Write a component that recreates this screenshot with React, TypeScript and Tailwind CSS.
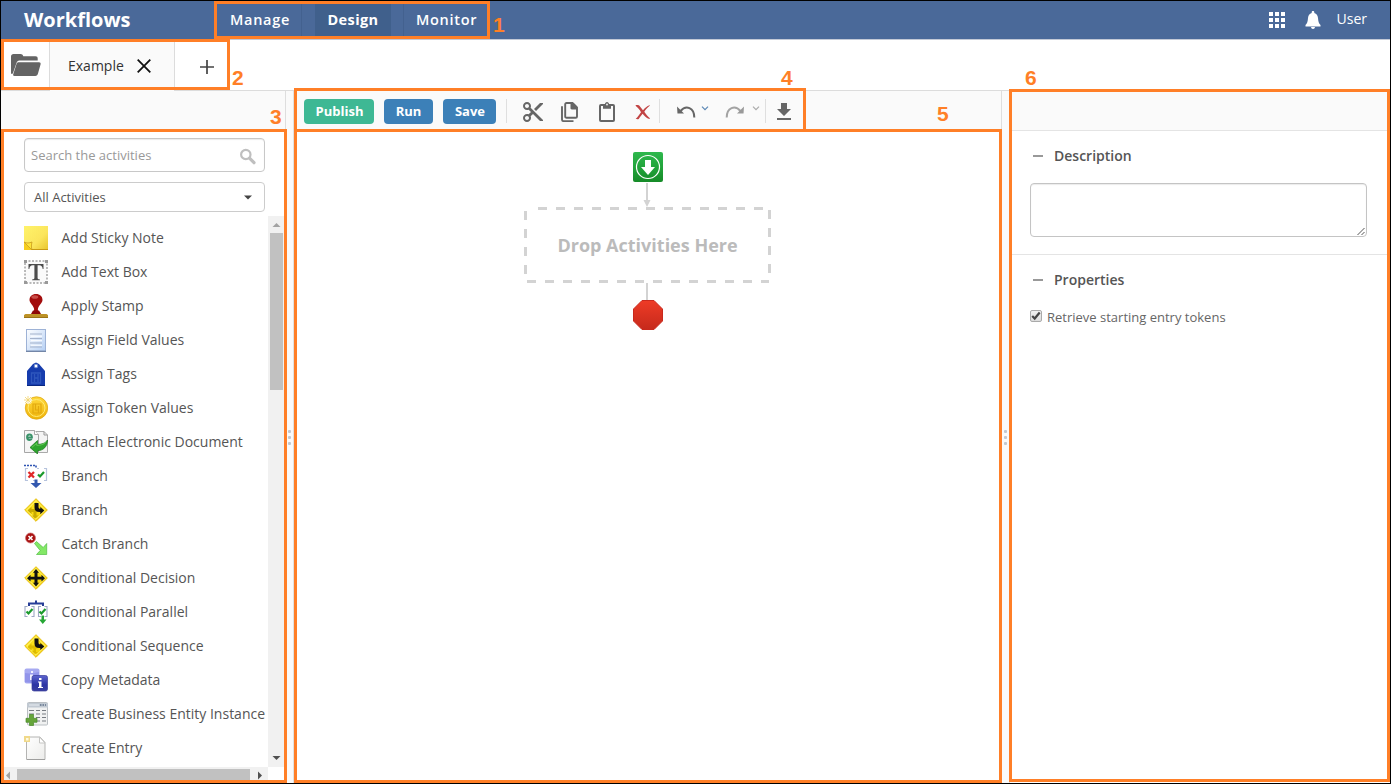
import type { ReactNode } from "react";

const BracketCheck = ({ x, y }: { x: number; y: number }) => (
  <path d={`M${x} ${y}l2 2 4-4.5`} fill="none" stroke="#1a9a2c" strokeWidth="2.200" />
);

const Svg24 = ({ children }: { children: ReactNode }) => (
  <svg width="24" height="24" viewBox="0 0 24 24" className="shrink-0">
    {children}
  </svg>
);

const StickyIcon = () => (
  <Svg24>
    <defs>
      <linearGradient id="sticky" x1="0" y1="0" x2="1" y2="1">
        <stop offset="0" stopColor="#fff36a" />
        <stop offset="0.6" stopColor="#fbe55c" />
        <stop offset="1" stopColor="#e8c42c" />
      </linearGradient>
    </defs>
    <path d="M0 0h24v24H8L0 16z" fill="url(#sticky)" />
    <path d="M8 23h16v1H8z" fill="#c99a14" />
    <path d="M0 16v8h8z" fill="#f6cd1c" />
    <path d="M0 16c3 1.500 5 1.200 8 0-.8 3-.8 5 0 8z" fill="#ffe53a" stroke="#c99a1c" strokeWidth=".8" />
  </Svg24>
);

const TextBoxIcon = () => (
  <Svg24>
    <rect x="1" y="1" width="22" height="22" fill="#fafafa" stroke="#777" strokeDasharray="2 1.5" />
    <path d="M0 0h3v3H0zM21 0h3v3h-3zM0 21h3v3H0zM21 21h3v3h-3z" fill="#999" />
    <path d="M4.500 4h15v5h-.8c-.4-2.600-1.300-3.700-3.400-3.700H13.600v12.500c0 1.100.5 1.600 2.300 1.700v.8H8.100v-.8c1.800-.1 2.300-.6 2.300-1.700V5.300H8.700C6.600 5.300 5.700 6.400 5.300 9h-.8z" fill="#4c4c4c" />
  </Svg24>
);

const StampIcon = () => (
  <Svg24>
    <path d="M12 0c4 0 6.500 2.500 6.500 6 0 3-3.500 5-4.500 8.500-.3 1.500 0 2.800.5 4h-5c.5-1.200.8-2.500.5-4C9 11 5.500 9 5.500 6 5.500 2.500 8 0 12 0z" fill="#a30d0d" />
    <ellipse cx="10.800" cy="3" rx="3.500" ry="1.800" fill="#d96a62" opacity=".7" />
    <path d="M9 16.500h6l2 3.500H7z" fill="#8c0707" />
    <path d="M1.500 20h21l1.500 1v3H0v-3z" fill="#bd9226" />
    <path d="M0 23h24v1H0z" fill="#9a7418" />
  </Svg24>
);

const FieldsIcon = () => (
  <Svg24>
    <defs>
      <linearGradient id="fields" x1="0" y1="0" x2="1" y2="1">
        <stop offset="0" stopColor="#fdfeff" />
        <stop offset="1" stopColor="#b6d0f4" />
      </linearGradient>
    </defs>
    <rect x="2.500" y="1.500" width="19" height="21.500" fill="url(#fields)" stroke="#9db2d6" />
    <path d="M2 23.300h20" stroke="#5d7296" strokeWidth="1" />
    <path d="M6 6h12M6 10.500h12M6 15h12M6 19h12" stroke="#a5b3cc" strokeWidth="1.200" />
    <path d="M7 8.200h11M7 12.700h11M7 17.200h11" stroke="#fff" strokeWidth="1" />
  </Svg24>
);

const TagIcon = () => (
  <Svg24>
    <path d="M12 .5L15 2l6 7v15H3V9l6-7z" fill="#163cad" />
    <circle cx="12" cy="4" r="1.900" fill="#fff" stroke="#5275ca" strokeWidth=".8" />
    <path d="M7.500 11h9v10h-9zM10.500 12v8M10.500 16h4M14 12v8" fill="none" stroke="#2f57bd" strokeWidth="1.300" />
    <path d="M3 23.500h18" stroke="#0a277f" />
  </Svg24>
);

const TokenIcon = () => (
  <Svg24>
    <defs>
      <linearGradient id="token" x1="0" y1="0" x2="0" y2="1">
        <stop offset="0" stopColor="#ffd83b" />
        <stop offset="1" stopColor="#f0b40a" />
      </linearGradient>
    </defs>
    <circle cx="12.500" cy="12" r="11.200" fill="url(#token)" stroke="#dfaa15" strokeWidth=".8" />
    <circle cx="12.500" cy="12" r="8.500" fill="none" stroke="#ffeb75" />
    <path d="M9 8h8v9H9zM11.500 8v6h3M14.500 10v7" fill="none" stroke="#e2a90e" strokeWidth="1.200" />
    <path d="M4 0v8M0 4h8M1 1l6 6M7 1L1 7" stroke="#fff" strokeWidth="2" />
    <path d="M4 0v8M0 4h8M1 1l6 6M7 1L1 7" stroke="#f1d36b" strokeWidth=".8" />
  </Svg24>
);

const AttachIcon = () => (
  <Svg24>
    <path d="M11.500 1.500H20l3.500 3.500v17.500h-12z" fill="#f4f4f4" stroke="#aaa" />
    <path d="M20 1.500V5h3.500" fill="none" stroke="#999" />
    <path d="M.5.5h10l4 4V22.500H.5z" fill="#f5f5f5" stroke="#a6a6a6" />
    <path d="M10.500.5v4h4" fill="#fff" stroke="#aaa" />
    <path d="M3 7.500h5C8 5.500 7 4.500 5.500 4.500S3 5.700 3 7.300C3 9 4 10 5.500 10c1 0 1.800-.4 2.300-1" fill="none" stroke="#3a936a" strokeWidth="1.800" />
    <path d="M6 17.500l7.500-7v3.800c4.500 0 7.500-.8 10-4.300 0 6.500-4 10.500-10 10.700V24z" fill="#2ea52d" stroke="#157518" strokeWidth=".7" />
    <path d="M8 17.300l4.700-4v2c4 0 7-.8 9-3" fill="none" stroke="#70d360" strokeWidth=".8" />
  </Svg24>
);

const BranchRouteIcon = () => (
  <Svg24>
    <path d="M0 1.500h12v3" fill="none" stroke="#2e54b3" strokeWidth="1.600" strokeDasharray="2 1" />
    <path d="M4 4.500H1.500v12H4M20 4.500h2.500v12H20M9 16.500h2M13 4.500h2" fill="none" stroke="#b6c3dd" strokeWidth="1.200" />
    <path d="M4.500 8l5.500 5.500M10 8l-5.500 5.500" stroke="#e02828" strokeWidth="2.300" />
    <BracketCheck x={14} y={10.500} />
    <path d="M10.500 15.500h3V19h4L12 24l-5.500-5h4z" fill="#3358af" />
  </Svg24>
);

const Diamond = ({ children }: { children: ReactNode }) => (
  <Svg24>
    <defs>
      <linearGradient id="road" x1="0" y1="0" x2="1" y2="1">
        <stop offset="0" stopColor="#ffed28" />
        <stop offset="1" stopColor="#f1c900" />
      </linearGradient>
    </defs>
    <path d="M12 .7L23.300 12 12 23.300.7 12z" fill="url(#road)" stroke="#e6bd12" />
    <path d="M12 2.700L21.300 12 12 21.300 2.700 12z" fill="none" stroke="#fff68c" strokeWidth=".8" />
    {children}
  </Svg24>
);

const BranchSignIcon = () => (
  <Diamond>
    <path d="M3.500 12.500l4-3.500v2h6v3h-1v3.500h2l-3.500 3-3-3h1.500V14h-2v2z" fill="#c9aa00" />
    <path d="M10.500 5h4v4c0 1.200.6 1.800 1.800 1.800V9l4 3.600-4 3.600V14h-1c-3 0-4.800-1.500-4.800-4.500z" fill="#111" />
  </Diamond>
);

const DecisionIcon = () => (
  <Diamond>
    <path d="M12 3l3 3.800h-1.500v4h4V8.800L21 12.200l-3.500 3.300v-2h-4v3.300H15L12 20.500l-3-3.700h1.500v-3.300h-4v2L3 12.200l3.500-3.400v2h4v-4H9z" fill="#111" />
  </Diamond>
);

const SequenceIcon = () => (
  <Diamond>
    <path d="M3.500 13l4-3.500v2h6v3H12v3.500h2l-3 2-3-3h1.500v-2.500h-2v2z" fill="#dcbb00" />
    <path d="M10.500 4.500h4v4c0 1.300.6 2 1.800 2V9l4 3.600-4 3.400v-2h-1c-3 0-4.800-1.500-4.800-4.500z" fill="#111" />
  </Diamond>
);

const CatchIcon = () => (
  <Svg24>
    <circle cx="6.500" cy="6" r="5" fill="#a81111" stroke="#ce6b6b" strokeWidth=".7" />
    <path d="M4.500 4l4 4M8.500 4l-4 4" stroke="#fff" strokeWidth="1.600" />
    <path d="M10.500 11.500l2-2 6.700 6 3.500-4V22.500H12.500l3.700-4z" fill="#83e866" stroke="#51bd43" strokeWidth=".7" />
  </Svg24>
);

const ParallelIcon = () => (
  <Svg24>
    <path d="M5 6V3.500h14V6M12 3.500V.5" fill="none" stroke="#273e98" strokeWidth="2" />
    <path d="M3.500 6.500H1v10h2.500M7.500 6.500H10v10H7.500M17 6.500h-2.500v10H17M20.500 6.500H23v10h-2.500" fill="none" stroke="#9da8c4" strokeWidth="1.100" />
    <BracketCheck x={2.500} y={11.500} />
    <BracketCheck x={15.500} y={11.500} />
    <path d="M17.500 15.500h2.500v4h2.500L18.800 24 15 19.500h2.500z" fill="#26a735" />
  </Svg24>
);

const MetadataIcon = () => (
  <Svg24>
    <defs>
      <linearGradient id="meta" x1="0" y1="0" x2="0" y2="1">
        <stop offset="0" stopColor="#5c63ce" />
        <stop offset=".6" stopColor="#2c34a4" />
        <stop offset="1" stopColor="#3b40a0" />
      </linearGradient>
    </defs>
    <rect x=".5" y=".5" width="15" height="15" rx="2" fill="#a7aaf1" />
    <path d="M1 5C6 6 11 5 15 4v10c-5 1-9 1-14 0z" fill="#9194ea" />
    <path d="M7 3h2v2H7zM6 6.500h3V12H6z" fill="#f1f1ff" />
    <rect x="8" y="7.500" width="15.500" height="15.500" rx="2" fill="url(#meta)" stroke="#383c9b" strokeWidth=".7" />
    <path d="M15 10h2.500v2H15zM14 13.500h3.500V19H19v1h-5v-1h1v-4.500h-1z" fill="#fff" />
  </Svg24>
);

const EntityIcon = () => (
  <Svg24>
    <rect x="3.500" y=".5" width="20" height="22.500" rx="1" fill="#f0f1f1" stroke="#b9bec2" />
    <path d="M3 1h21v4.500H3z" fill="#c1c9d2" />
    <path d="M5 3h10" stroke="#e7ecf1" />
    <path d="M16 3h6" stroke="#60728b" strokeWidth="1.500" strokeDasharray="1.500 1" />
    <path d="M5 8.500h5M12 8.500h4M18 8.500h4M5 12h5M12 12h4M18 12h4M12 15.500h4M18 15.500h4M12 19h4M18 19h4" stroke="#777c82" strokeWidth="1.200" />
    <path d="M5.500 12.500h4v3.800h3.500v4H9.500V23.500h-4v-3.200H2v-4h3.500z" fill="#65a53a" stroke="#4b8a2b" strokeWidth=".7" />
  </Svg24>
);

const EntryIcon = () => (
  <Svg24>
    <defs>
      <linearGradient id="entry" x1="0" y1="0" x2="1" y2="1">
        <stop offset="0" stopColor="#fff" />
        <stop offset="1" stopColor="#ececea" />
      </linearGradient>
    </defs>
    <path d="M2.500 1h13.500l5 5.500v17H2.500z" fill="url(#entry)" stroke="#b4b4b2" />
    <path d="M15.500 1v6H21z" fill="#fff" stroke="#c5c5c3" />
    <path d="M0 0h6v6H0z" fill="#f0d98a" />
    <path d="M2 2h2.500v2.500H2z" fill="#fffbe0" />
    <path d="M3 23.500h18" stroke="#999" strokeWidth=".8" />
  </Svg24>
);

const activities: { label: string; icon: ReactNode }[] = [
  { label: "Add Sticky Note", icon: <StickyIcon /> },
  { label: "Add Text Box", icon: <TextBoxIcon /> },
  { label: "Apply Stamp", icon: <StampIcon /> },
  { label: "Assign Field Values", icon: <FieldsIcon /> },
  { label: "Assign Tags", icon: <TagIcon /> },
  { label: "Assign Token Values", icon: <TokenIcon /> },
  { label: "Attach Electronic Document", icon: <AttachIcon /> },
  { label: "Branch", icon: <BranchRouteIcon /> },
  { label: "Branch", icon: <BranchSignIcon /> },
  { label: "Catch Branch", icon: <CatchIcon /> },
  { label: "Conditional Decision", icon: <DecisionIcon /> },
  { label: "Conditional Parallel", icon: <ParallelIcon /> },
  { label: "Conditional Sequence", icon: <SequenceIcon /> },
  { label: "Copy Metadata", icon: <MetadataIcon /> },
  { label: "Create Business Entity Instance", icon: <EntityIcon /> },
  { label: "Create Entry", icon: <EntryIcon /> },
];

const Header = () => (
  <header className="flex h-[39px] shrink-0 border-b border-[#c3c9d6] bg-[#4a6999] text-white">
    <div className="w-[213px] pt-[3px] pl-[23px] text-[20px] leading-8 font-bold">Workflows</div>
    <nav className="flex pt-[3px] text-[14.5px] leading-8 font-semibold tracking-[0.7px]">
      <div className="w-[88px] border-r border-[#43618f] pl-4">Manage</div>
      <div className="ml-[13px] w-[76px] bg-[#40608c] text-center font-bold tracking-[0.4px]">Design</div>
      <div className="ml-[12px] border-l border-[#43618f] pl-3">Monitor</div>
    </nav>
    <div className="ml-auto flex pr-[23px]">
      <svg width="16" height="16" viewBox="0 0 16 16" className="mt-[11px]" fill="#fff">
        <path d="M0 0h4v4H0zM6 0h4v4H6zM12 0h4v4h-4zM0 6h4v4H0zM6 6h4v4H6zM12 6h4v4h-4zM0 12h4v4H0zM6 12h4v4H6zM12 12h4v4h-4z" />
      </svg>
      <svg width="16" height="18" viewBox="0 0 16 18" className="mt-[10px] ml-[20px]" fill="#fff">
        <path d="M8 0c.8 0 1.300.5 1.300 1.300v.6C11.500 2.500 12.800 4.300 13 7c.2 3.500.8 5.500 2.500 7v1.400H.5V14C2.200 12.500 2.800 10.500 3 7c.2-2.700 1.500-4.500 3.700-5.100v-.6C6.700.5 7.200 0 8 0z" />
        <path d="M6 16h4c-.2 1.200-.9 2-2 2s-1.800-.8-2-2z" />
      </svg>
      <span className="ml-[16px] pt-px text-[14px] leading-[34px]">User</span>
    </div>
  </header>
);

const TabBar = () => (
  <div className="flex h-[51px] shrink-0">
    <div className="flex w-[49px] border-r border-b border-[#dcdcdc] pt-[14px] pl-[10px]">
      <svg width="30" height="23" viewBox="0 0 30 23" fill="#646464">
        <path d="M0 19V2.500C0 1 1 0 2.500 0h7C11 0 11.800.8 12.300 2.200H24.500c1.500 0 2.200.8 2.200 2.300v2H8.500C6.800 6.500 6 7.500 5.500 9L2 19c-.5 1.200-2 1.200-2 0z" />
        <path d="M7.700 8.300H28c1.300 0 1.900.8 1.600 2L27 19.500c-.4 1.600-1.200 2.500-2.700 2.500H3.500c-1.300 0-1.700-.7-1.200-2L5.500 10c.4-1.100 1-1.700 2.200-1.700z" />
      </svg>
    </div>
    <div className="flex w-[125px] border-r border-[#dcdcdc] bg-[#fafafa] pl-[18px]">
      <span className="w-[69px] text-[14px] leading-[51px] text-[#333]">Example</span>
      <svg width="14" height="14" viewBox="0 0 14 14" className="mt-[19px]">
        <path d="M.7.7l12.600 12.600M13.300.7L.7 13.300" stroke="#111" strokeWidth="1.800" />
      </svg>
    </div>
    <div className="grow border-b border-[#dcdcdc] pt-[20px] pl-[25px]">
      <svg width="14" height="14" viewBox="0 0 14 14">
        <path d="M7 0v14M0 7h14" stroke="#444" strokeWidth="1.700" />
      </svg>
    </div>
  </div>
);

const ActivitiesPanel = () => (
  <aside className="flex w-[285px] shrink-0 flex-col border-r border-[#dedede]">
    <div className="h-10 shrink-0 bg-[#fafafa]" />
    <div className="flex shrink-0 flex-col gap-[10px] pt-[7px] pl-[23px]">
      <div className="flex h-[34px] w-[241px] justify-between rounded border border-[#c8c8c8] pr-2 pl-[6px] shadow-[inset_0_1px_1px_rgba(0,0,0,0.08)]">
        <span className="text-[13px] leading-[33px] text-[#999]">Search the activities</span>
        <svg width="17" height="17" viewBox="0 0 17 17" className="mt-[9px]">
          <circle cx="6.800" cy="6.500" r="4.700" fill="none" stroke="#bfbfbf" strokeWidth="2.200" />
          <path d="M10.500 10.200l4.500 4.500" stroke="#bfbfbf" strokeWidth="3.200" strokeLinecap="round" />
        </svg>
      </div>
      <div className="flex h-[30px] w-[241px] items-center justify-between rounded border border-[#ccc] pr-3 pl-[9px]">
        <span className="text-[13px] leading-7 text-[#555]">All Activities</span>
        <svg width="8" height="5" viewBox="0 0 8 5">
          <path d="M0 .5h8L4 4.500z" fill="#444" />
        </svg>
      </div>
    </div>
    <div className="mt-1 flex min-h-0 grow">
      <ul className="flex w-[267px] flex-col overflow-hidden pt-[5px] pl-[23px]">
        {activities.map((item, i) => (
          <li key={i} className="flex h-[34px] shrink-0 items-center gap-[13.5px]">
            {item.icon}
            <span className="text-[14px] leading-5 whitespace-nowrap text-[#555]">{item.label}</span>
          </li>
        ))}
      </ul>
      <div className="flex w-4 flex-col bg-[#f1f1f1]">
        <svg width="17" height="17" viewBox="0 0 17 17" className="shrink-0">
          <path d="M4.500 11h8l-4-4z" fill="#a3a3a3" />
        </svg>
        <div className="ml-[2px] h-[157px] w-[13px] bg-[#c1c1c1]" />
        <svg width="17" height="17" viewBox="0 0 17 17" className="mt-auto shrink-0">
          <path d="M4.500 6h8l-4 4z" fill="#505050" />
        </svg>
      </div>
    </div>
    <div className="flex h-4 shrink-0 pl-[2px]">
      <div className="flex h-[13px] w-[265px] bg-[#f1f1f1]">
        <svg width="14" height="14" viewBox="0 0 14 14">
          <path d="M7 4.500v8l-4-4z" fill="#a3a3a3" />
        </svg>
        <div className="mt-[2px] h-[11px] w-[233px] bg-[#c1c1c1]" />
        <svg width="17" height="14" viewBox="0 0 17 14">
          <path d="M8 4.500v8l4-4z" fill="#505050" />
        </svg>
      </div>
    </div>
  </aside>
);

const Splitter = () => (
  <div className="flex w-2 shrink-0 flex-col items-center gap-[3px] border-r border-[#e0e0e0] bg-[#fafafa] pt-[339px]">
    <div className="h-[3px] w-[3px] rounded-[1px] bg-[#c3c7ce]" />
    <div className="h-[3px] w-[3px] rounded-[1px] bg-[#c3c7ce]" />
    <div className="h-[3px] w-[3px] rounded-[1px] bg-[#c3c7ce]" />
  </div>
);

const Divider = () => <div className="mt-2 h-6 w-px bg-[#dfdfdf]" />;

const Chevron = ({ color }: { color: string }) => (
  <svg width="8" height="5" viewBox="0 0 8 5" className="mt-[15px]">
    <path d="M1 .7l3 3 3-3" fill="none" stroke={color} strokeWidth="1.200" />
  </svg>
);

const Toolbar = () => (
  <div className="flex h-10 shrink-0 bg-[#fafafa] pl-[10px]">
    <div className="flex gap-[10px] pt-2 text-center text-[13px] leading-[25px] font-bold text-white">
      <div className="h-[25px] w-[70px] rounded bg-[#3eb894] pl-px">Publish</div>
      <div className="h-[25px] w-[49px] rounded bg-[#3c80b8]">Run</div>
      <div className="h-[25px] w-[53px] rounded bg-[#3c80b8] pl-px">Save</div>
    </div>
    <div className="ml-[10px] flex">
      <Divider />
    </div>
    <svg width="24" height="24" viewBox="0 0 24 24" className="mt-[9px] ml-[14px]" fill="#666">
      <path d="M9.640 7.640c.23-.5.36-1.050.36-1.640 0-2.210-1.790-4-4-4S2 3.790 2 6s1.790 4 4 4c.59 0 1.140-.13 1.640-.36L10 12l-2.360 2.360C7.140 14.130 6.590 14 6 14c-2.210 0-4 1.790-4 4s1.790 4 4 4 4-1.790 4-4c0-.59-.13-1.140-.36-1.640L12 14l7 7h3v-1L9.640 7.640zM6 8c-1.100 0-2-.89-2-2s.9-2 2-2 2 .89 2 2-.9 2-2 2zm0 12c-1.100 0-2-.89-2-2s.9-2 2-2 2 .89 2 2-.9 2-2 2zM19 3l-6 6 2 2 7-7V3h-3z" />
    </svg>
    <svg width="17" height="20" viewBox="0 0 17 20" className="mt-[11px] ml-[16px]">
      <path d="M5.500 1h6L16 5.500v9c0 .8-.5 1.300-1.300 1.300H5.500c-.8 0-1.300-.5-1.300-1.300V2.300C4.200 1.500 4.700 1 5.500 1z" fill="none" stroke="#666" strokeWidth="1.900" />
      <path d="M9.500 1h3L16 4.500v3h-5.200c-.8 0-1.300-.5-1.300-1.200z" fill="#666" />
      <path d="M1 4.300v13.200c0 1 .6 1.600 1.500 1.600h10" fill="none" stroke="#666" strokeWidth="1.900" />
    </svg>
    <svg width="16" height="20" viewBox="0 0 16 20" className="mt-[11px] ml-[21px]">
      <rect x="1" y="3" width="14" height="16" rx="1" fill="none" stroke="#666" strokeWidth="2" />
      <path d="M4 2.500h1.800C6 1 6.800 0 8 0s2 1 2.200 2.500H12v4.300H4z" fill="#666" />
      <circle cx="8" cy="2.500" r=".9" fill="#fafafa" />
    </svg>
    <svg width="16" height="15" viewBox="0 0 16 15" className="mt-[14px] ml-[20px]" fill="#c24444">
      <path d="M1 0h2c1 .2 1.500.8 2.200 1.800L8 5.300C10 3 12 1 14.500.3l.5.2C12.500 2.300 10.800 4.300 9.300 6.800c2 2.700 3.600 4.800 5.700 6.500l-.7.700c-2.700-.8-4.700-2.500-6.700-5.200-1.700 2-2.800 3.700-3.900 5.200-1 .5-2 .3-3-.2 2-1.800 3.600-4 5.300-6.600C4.500 4.500 3 2.500.5.700z" />
    </svg>
    <div className="ml-[8px] flex">
      <Divider />
    </div>
    <svg width="19" height="14" viewBox="0 0 19 14" className="mt-[14px] ml-[17px]">
      <path d="M3.500 6C9-.5 17.300 2.500 17.300 12.500" fill="none" stroke="#666" strokeWidth="2" />
      <path d="M0 1.500L.5 8.500h6.500z" fill="#666" />
    </svg>
    <div className="ml-[5px] flex">
      <Chevron color="#5b87b5" />
    </div>
    <svg width="19" height="14" viewBox="0 0 19 14" className="mt-[14px] ml-[16px]">
      <path d="M15.500 6C10-.5 1.700 2.500 1.700 12.500" fill="none" stroke="#a3a3a3" strokeWidth="2" />
      <path d="M19 1.500L18.500 8.500h-6.500z" fill="#999" />
    </svg>
    <div className="ml-[8px] flex">
      <Chevron color="#aaa" />
    </div>
    <div className="ml-[5px] flex">
      <Divider />
    </div>
    <svg width="14" height="17" viewBox="0 0 14 17" className="mt-[12px] ml-[11px]" fill="#666">
      <path d="M4 0h6v6h4l-7 7-7-7h4zM0 15h14v2H0z" />
    </svg>
  </div>
);

const Canvas = () => (
  <main className="flex w-[708px] shrink-0 flex-col border-r border-[#dedede]">
    <Toolbar />
    <div className="flex grow flex-col items-center bg-white pt-[21px]">
      <svg width="30" height="30" viewBox="0 0 30 30" className="ml-px">
        <defs>
          <linearGradient id="start" x1="0" y1="0" x2="0" y2="1">
            <stop offset="0" stopColor="#2eb84d" />
            <stop offset=".5" stopColor="#22a43b" />
            <stop offset="1" stopColor="#168b28" />
          </linearGradient>
        </defs>
        <rect width="30" height="30" rx="2" fill="url(#start)" />
        <circle cx="15" cy="15" r="11.500" fill="none" stroke="#fff" strokeWidth="1.200" />
        <path d="M12 8h6v7h4l-7 8-7-8h4z" fill="#fff" />
      </svg>
      <svg width="8" height="25" viewBox="0 0 8 25" className="mr-px">
        <path d="M3 1h2v17h2.500L4 25 .5 18H3z" fill="#d3d3d3" />
      </svg>
      <div className="relative flex h-[76px] w-[247px] justify-center">
        <svg width="247" height="76" viewBox="0 0 247 76" className="absolute inset-0" fill="none" stroke="#d3d3d3" strokeWidth="3" strokeDasharray="9 9">
          <path d="M14 1.500h227" />
          <path d="M245.500 3v72" />
          <path d="M3 74.500h242" />
          <path d="M1.500 4v70" />
        </svg>
        <span className="text-[18px] leading-[76px] font-bold text-[#bbb]">Drop Activities Here</span>
      </div>
      <div className="mr-px h-[17px] w-[2px] bg-[#d3d3d3]" />
      <svg width="30" height="30" viewBox="0 0 30 30" className="ml-px">
        <defs>
          <linearGradient id="stop" x1="0" y1="0" x2="0" y2="1">
            <stop offset="0" stopColor="#ee3b26" />
            <stop offset="1" stopColor="#c62a1c" />
          </linearGradient>
        </defs>
        <path d="M9 .5h12L29.500 9v12L21 29.500H9L.5 21V9z" fill="url(#stop)" stroke="#c9291d" />
      </svg>
    </div>
  </main>
);

const SectionTitle = ({ children }: { children: string }) => (
  <div className="flex items-center gap-[11px] pl-[23px] text-[14px] leading-5 font-semibold text-[#555]">
    <span className="h-[2px] w-[10px] bg-[#999]" />
    {children}
  </div>
);

const PropertiesPanel = () => (
  <aside className="flex grow flex-col">
    <div className="h-10 shrink-0 border-b border-[#e4e4e4] bg-[#fafafa]" />
    <section className="h-[124px] shrink-0 border-b border-[#e4e4e4] pt-[15px]">
      <SectionTitle>Description</SectionTitle>
      <div className="mt-[17px] ml-[20px] flex h-[54px] w-[337px] items-end justify-end rounded border border-[#c4c4c4] shadow-[inset_0_1px_1px_rgba(0,0,0,0.08)]">
        <svg width="9" height="9" viewBox="0 0 9 9">
          <path d="M.5 8L7.500 1M4.500 8l3-3" stroke="#555" strokeWidth="1" />
        </svg>
      </div>
    </section>
    <section className="pt-[15px]">
      <SectionTitle>Properties</SectionTitle>
      <div className="mt-[17px] ml-[20px] flex items-center gap-[5px]">
        <span className="mb-[2px] flex h-3 w-3 items-center justify-center rounded-[2px] border border-[#aaa] bg-gradient-to-b from-[#f0f0f0] to-[#dcdcdc]">
          <svg width="10" height="10" viewBox="0 0 10 10">
            <path d="M1.200 5l2.500 2.500L8.700 1.500" fill="none" stroke="#444" strokeWidth="2.200" />
          </svg>
        </span>
        <span className="text-[13px] leading-5 text-[#666]">Retrieve starting entry tokens</span>
      </div>
    </section>
  </aside>
);

const Callouts = () => (
  <div className="pointer-events-none absolute inset-0 font-['Liberation_Sans',Arial,sans-serif] text-[21px] leading-5 font-bold text-[#ff7f27]">
    <div className="absolute top-0 left-[213px] h-[38px] w-[276px] border-3 border-[#ff7f27]" />
    <div className="absolute top-[38px] left-0 h-[51px] w-[229px] border-3 border-[#ff7f27]" />
    <div className="absolute top-[128px] left-0 h-[654px] w-[286px] border-3 border-[#ff7f27]" />
    <div className="absolute top-[87px] left-[293px] h-[44px] w-[512px] border-3 border-[#ff7f27]" />
    <div className="absolute top-[128px] left-[293px] h-[654px] w-[708px] border-3 border-[#ff7f27]" />
    <div className="absolute top-[88px] left-[1008px] h-[693px] w-[381px] border-3 border-[#ff7f27]" />
    <span className="absolute top-[14px] left-[492px]">1</span>
    <span className="absolute top-[67px] left-[231px]">2</span>
    <span className="absolute top-[106px] left-[269px]">3</span>
    <span className="absolute top-[67px] left-[780px]">4</span>
    <span className="absolute top-[103px] left-[936px]">5</span>
    <span className="absolute top-[67px] left-[1024px]">6</span>
  </div>
);

export default function App() {
  return (
    <div className="relative flex h-[784px] w-[1391px] flex-col overflow-hidden border border-black bg-white font-['Open_Sans',sans-serif]">
      <Header />
      <TabBar />
      <div className="flex min-h-0 grow">
        <ActivitiesPanel />
        <Splitter />
        <Canvas />
        <Splitter />
        <PropertiesPanel />
      </div>
      <Callouts />
    </div>
  );
}
